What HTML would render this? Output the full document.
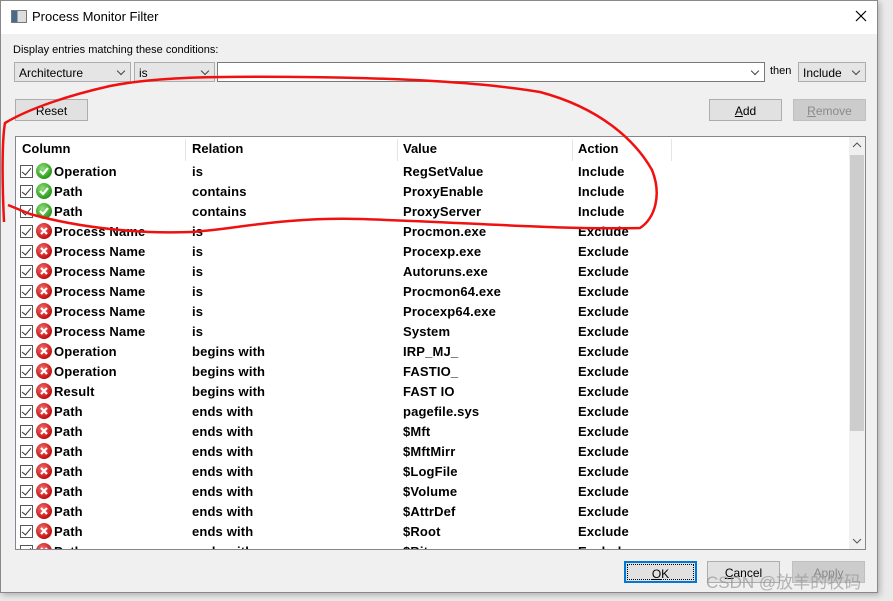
<!DOCTYPE html>
<html><head><style>
*{margin:0;padding:0;box-sizing:border-box}
body{width:893px;height:601px;background:#eaeaea;position:relative;overflow:hidden;font-family:"Liberation Sans","DejaVu Sans",sans-serif;font-size:12px;color:#000}
.win{position:absolute;left:0;top:0;width:878px;height:593px;background:#f0f0f0;box-shadow:0 0 0 1px #888 inset,2px 2px 6px rgba(0,0,0,.25)}
.title{position:absolute;left:1px;top:1px;width:876px;height:33px;background:#fff}
.title span{position:absolute;left:31px;top:8px;font-size:13px}
.abs{position:absolute}
.combo{position:absolute;height:20px;background:#e5e5e5;border:1px solid #adadad;font-size:12px;padding:3px 0 0 4px}
.combo:after{content:"";position:absolute;right:6px;top:5px;width:5px;height:5px;border-right:1px solid #444;border-bottom:1px solid #444;transform:rotate(45deg)}
.btn{position:absolute;height:22px;background:#e1e1e1;border:1px solid #adadad;text-align:center;padding-top:4px;font-size:12px}
.list{position:absolute;left:15px;top:136px;width:851px;height:414px;background:#fff;border:1px solid #828790;overflow:hidden}
.hdr{position:absolute;top:1px;left:0;height:24px;font-weight:bold;font-size:13px}
.row{position:absolute;left:0;height:20px;font-weight:bold;font-size:13px;width:840px;letter-spacing:0.15px}
.row div,.hdr div{position:absolute;top:3px;white-space:nowrap}
.cb{position:absolute;left:4px;top:4px;width:13px;height:13px;border:1px solid #555;background:#fff}
.cb:after{content:"";position:absolute;left:3px;top:0px;width:4px;height:8px;border-right:1.5px solid #333;border-bottom:1.5px solid #333;transform:rotate(40deg)}
.ic{position:absolute;left:20px;top:2px;width:16px;height:16px;border-radius:50%}
.ok{background:radial-gradient(circle at 40% 35%,#8fe07a,#2a9a1a 70%,#1b6a10)}
.no{background:radial-gradient(circle at 40% 35%,#f07070,#c41010 70%,#800)}
.ic svg{position:absolute;left:0;top:0}
</style></head><body>
<div class="win">
<div class="title">
<div class="abs" style="left:10px;top:9px;width:16px;height:13px;border:1px solid #777;background:linear-gradient(90deg,#4a6a8a 0 40%,#ddd 40%)"></div>
<span>Process Monitor Filter</span>
<svg class="abs" style="left:854px;top:9px" width="12" height="12"><path d="M1 1L11 11M11 1L1 11" stroke="#000" stroke-width="1.2"/></svg>
</div>
<div class="abs" style="left:13px;top:44px;font-size:11px">Display entries matching these conditions:</div>
<div class="combo" style="left:14px;top:62px;width:117px">Architecture</div>
<div class="combo" style="left:134px;top:62px;width:81px">is</div>
<div class="combo" style="left:217px;top:62px;width:548px;background:#fff;border-color:#7a7a7a"></div>
<div class="abs" style="left:770px;top:65px;font-size:11px">then</div>
<div class="combo" style="left:798px;top:62px;width:68px">Include</div>
<div class="btn" style="left:15px;top:99px;width:73px">Reset</div>
<div class="btn" style="left:709px;top:99px;width:73px"><u>A</u>dd</div>
<div class="btn" style="left:793px;top:99px;width:73px;color:#8a8a8a;background:#ccc;border-color:#bfbfbf"><u>R</u>emove</div>
<div class="list">
<div class="hdr"><div style="left:6px">Column</div><div style="left:176px">Relation</div><div style="left:387px">Value</div><div style="left:562px">Action</div></div>
<div class="abs" style="left:169px;top:2px;width:1px;height:22px;background:#e5e5e5"></div>
<div class="abs" style="left:381px;top:2px;width:1px;height:22px;background:#e5e5e5"></div>
<div class="abs" style="left:556px;top:2px;width:1px;height:22px;background:#e5e5e5"></div>
<div class="abs" style="left:655px;top:2px;width:1px;height:22px;background:#e5e5e5"></div>
<div id="rows"></div>
<div class="abs" style="left:833px;top:0;width:16px;height:412px;background:#f0f0f0"></div>
<div class="abs" style="left:834px;top:18px;width:14px;height:276px;background:#cdcdcd"></div>
<svg class="abs" style="left:836px;top:4px" width="10" height="8"><path d="M1 6L5 2L9 6" stroke="#555" fill="none"/></svg>
<svg class="abs" style="left:836px;top:400px" width="10" height="8"><path d="M1 2L5 6L9 2" stroke="#555" fill="none"/></svg>
</div>
<div class="btn" style="left:624px;top:561px;width:73px;border:2px solid #0078d7;outline:1px dotted #000;outline-offset:-4px"><u>O</u>K</div>
<div class="btn" style="left:707px;top:561px;width:73px"><u>C</u>ancel</div>
<div class="btn" style="left:792px;top:561px;width:73px;color:#8a8a8a;background:#ccc;border-color:#bfbfbf">Apply</div>
</div>
<div class="abs" style="left:706px;top:568px;font-size:17px;color:rgba(150,150,150,.7);font-family:'Liberation Sans','Noto Sans CJK SC',sans-serif">CSDN @放羊的牧码</div>
<svg class="abs" style="left:0;top:0" width="893" height="601"><path d="M4 222 C2 180 2 140 5 123 C30 108 70 95 110 86 C150 78 200 76 300 77 C400 78 480 82 540 92 C600 108 635 140 652 170 C662 195 655 218 640 228 C560 230 460 222 360 219 C280 217 230 230 190 232 C140 234 80 228 30 214 L8 205" stroke="#f01010" stroke-width="2.5" fill="none"/></svg>
<script>
var d=[["ok","Operation","is","RegSetValue","Include"],["ok","Path","contains","ProxyEnable","Include"],["ok","Path","contains","ProxyServer","Include"],
["no","Process Name","is","Procmon.exe","Exclude"],["no","Process Name","is","Procexp.exe","Exclude"],["no","Process Name","is","Autoruns.exe","Exclude"],["no","Process Name","is","Procmon64.exe","Exclude"],["no","Process Name","is","Procexp64.exe","Exclude"],["no","Process Name","is","System","Exclude"],
["no","Operation","begins with","IRP_MJ_","Exclude"],["no","Operation","begins with","FASTIO_","Exclude"],["no","Result","begins with","FAST IO","Exclude"],
["no","Path","ends with","pagefile.sys","Exclude"],["no","Path","ends with","$Mft","Exclude"],["no","Path","ends with","$MftMirr","Exclude"],["no","Path","ends with","$LogFile","Exclude"],["no","Path","ends with","$Volume","Exclude"],["no","Path","ends with","$AttrDef","Exclude"],["no","Path","ends with","$Root","Exclude"],["no","Path","ends with","$Bitmap","Exclude"]];
var h="";d.forEach(function(r,i){var ic=r[0]=="ok"?'<svg width="16" height="16"><path d="M4 8L7 11L12 5" stroke="#fff" stroke-width="2.2" fill="none"/></svg>':'<svg width="16" height="16"><path d="M5 5L11 11M11 5L5 11" stroke="#fff" stroke-width="2.2"/></svg>';
h+='<div class="row" style="top:'+(24+i*20)+'px"><span class="cb"></span><span class="ic '+r[0]+'">'+ic+'</span><div style="left:38px">'+r[1]+'</div><div style="left:176px">'+r[2]+'</div><div style="left:387px">'+r[3]+'</div><div style="left:562px">'+r[4]+'</div></div>';});
document.getElementById("rows").innerHTML=h;
</script>
</body></html>
